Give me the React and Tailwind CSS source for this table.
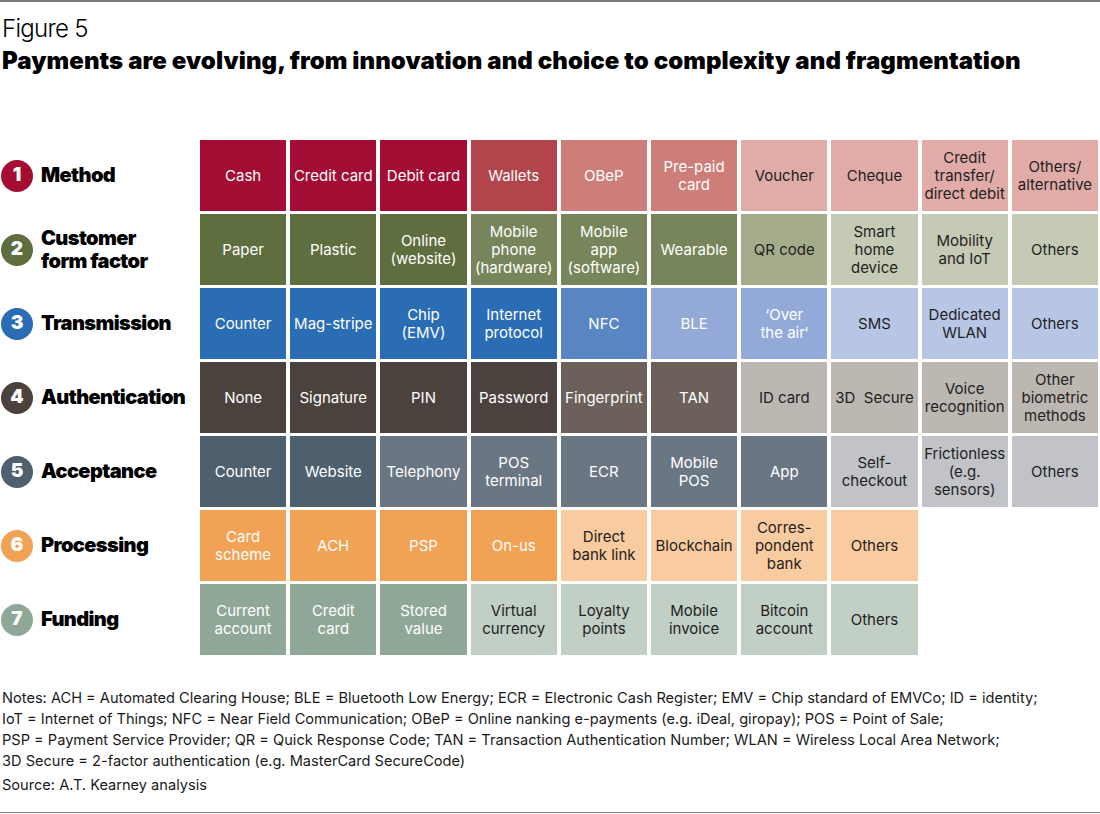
import React from "react";

const W = "text-white";
const D = "text-[#1e1e1e]";

const rows = [
  {
    n: "1",
    circle: "bg-[#a50d33]",
    label: ["Method"],
    cells: [
      ["Cash", "bg-[#a30c33] " + W],
      ["Credit card", "bg-[#a30c33] " + W],
      ["Debit card", "bg-[#a30c33] " + W],
      ["Wallets", "bg-[#b2444c] " + W],
      ["OBeP", "bg-[#ce7e79] " + W],
      ["Pre-paid\ncard", "bg-[#ce7e79] " + W],
      ["Voucher", "bg-[#e1aca8] " + D],
      ["Cheque", "bg-[#e1aca8] " + D],
      ["Credit\ntransfer/\ndirect debit", "bg-[#e1aca8] " + D],
      ["Others/\nalternative", "bg-[#e1aca8] " + D],
    ],
  },
  {
    n: "2",
    circle: "bg-[#5f6e3f]",
    label: ["Customer", "form factor"],
    cells: [
      ["Paper", "bg-[#5f6e3f] " + W],
      ["Plastic", "bg-[#5f6e3f] " + W],
      ["Online\n(website)", "bg-[#5f6e3f] " + W],
      ["Mobile\nphone\n(hardware)", "bg-[#77865a] " + W],
      ["Mobile\napp\n(software)", "bg-[#77865a] " + W],
      ["Wearable", "bg-[#77865a] " + W],
      ["QR code", "bg-[#a5ac8a] " + D],
      ["Smart\nhome\ndevice", "bg-[#c5cab4] " + D],
      ["Mobility\nand IoT", "bg-[#c5cab4] " + D],
      ["Others", "bg-[#c5cab4] " + D],
    ],
  },
  {
    n: "3",
    circle: "bg-[#2a6db5]",
    label: ["Transmission"],
    cells: [
      ["Counter", "bg-[#2a6db5] " + W],
      ["Mag-stripe", "bg-[#2a6db5] " + W],
      ["Chip\n(EMV)", "bg-[#2a6db5] " + W],
      ["Internet\nprotocol", "bg-[#2a6db5] " + W],
      ["NFC", "bg-[#5b86c4] " + W],
      ["BLE", "bg-[#93a9d8] " + W],
      ["‘Over\nthe air‘", "bg-[#93a9d8] " + W],
      ["SMS", "bg-[#b8c6e6] " + D],
      ["Dedicated\nWLAN", "bg-[#b8c6e6] " + D],
      ["Others", "bg-[#b8c6e6] " + D],
    ],
  },
  {
    n: "4",
    circle: "bg-[#4b423d]",
    label: ["Authentication"],
    cells: [
      ["None", "bg-[#4b423d] " + W],
      ["Signature", "bg-[#4b423d] " + W],
      ["PIN", "bg-[#4b423d] " + W],
      ["Password", "bg-[#4b423d] " + W],
      ["Fingerprint", "bg-[#6b605a] " + W],
      ["TAN", "bg-[#6b605a] " + W],
      ["ID card", "bg-[#bdb7b2] " + D],
      ["3D  Secure", "bg-[#bdb7b2] " + D],
      ["Voice\nrecognition", "bg-[#bdb7b2] " + D],
      ["Other\nbiometric\nmethods", "bg-[#bdb7b2] " + D],
    ],
  },
  {
    n: "5",
    circle: "bg-[#4e5f6d]",
    label: ["Acceptance"],
    cells: [
      ["Counter", "bg-[#4e5f6d] " + W],
      ["Website", "bg-[#4e5f6d] " + W],
      ["Telephony", "bg-[#6b7683] " + W],
      ["POS\nterminal", "bg-[#6b7683] " + W],
      ["ECR", "bg-[#6b7683] " + W],
      ["Mobile\nPOS", "bg-[#6b7683] " + W],
      ["App", "bg-[#6b7683] " + W],
      ["Self-\ncheckout", "bg-[#c1c3c8] " + D],
      ["Frictionless\n(e.g.\nsensors)", "bg-[#c1c3c8] " + D],
      ["Others", "bg-[#c1c3c8] " + D],
    ],
  },
  {
    n: "6",
    circle: "bg-[#f2a254]",
    label: ["Processing"],
    cells: [
      ["Card\nscheme", "bg-[#f2a254] " + W],
      ["ACH", "bg-[#f2a254] " + W],
      ["PSP", "bg-[#f2a254] " + W],
      ["On-us", "bg-[#f2a254] " + W],
      ["Direct\nbank link", "bg-[#f9cba0] " + D],
      ["Blockchain", "bg-[#f9cba0] " + D],
      ["Corres-\npondent\nbank", "bg-[#f9cba0] " + D],
      ["Others", "bg-[#f9cba0] " + D],
    ],
  },
  {
    n: "7",
    circle: "bg-[#8fa796]",
    label: ["Funding"],
    cells: [
      ["Current\naccount", "bg-[#8fa796] " + W],
      ["Credit\ncard", "bg-[#8fa796] " + W],
      ["Stored\nvalue", "bg-[#8fa796] " + W],
      ["Virtual\ncurrency", "bg-[#c2cfc5] " + D],
      ["Loyalty\npoints", "bg-[#c2cfc5] " + D],
      ["Mobile\ninvoice", "bg-[#c2cfc5] " + D],
      ["Bitcoin\naccount", "bg-[#c2cfc5] " + D],
      ["Others", "bg-[#c2cfc5] " + D],
    ],
  },
];

function Cell({ text, cls }) {
  const lines = text.split("\n");
  return (
    <div
      className={
        "h-[71px] flex items-center justify-center text-center text-[15px] leading-[18px] whitespace-pre " +
        cls
      }
    >
      <div>
        {lines.map((l, i) => (
          <div key={i}>{l}</div>
        ))}
      </div>
    </div>
  );
}

export default function App() {
  return (
    <div
      className="w-[1100px] h-[814px] bg-white text-black flex flex-col overflow-hidden"
      style={{ fontFamily: "Inter, 'Liberation Sans', sans-serif" }}
    >
      <div className="h-[2px] bg-[#7d7d7d] shrink-0" />
      <div className="h-[138px] shrink-0 pl-[2px]">
        <div className="mt-[12px] text-[24px] leading-[30px] font-light tracking-[-0.7px]">
          Figure 5
        </div>
        <div className="mt-[2px] text-[24px] leading-[30px] font-black tracking-[0.08px]">
          Payments are evolving, from innovation and choice to complexity and fragmentation
        </div>
      </div>
      <div className="grid grid-cols-[196px_repeat(10,minmax(0,1fr))] gap-x-[4px] gap-y-[3px] w-[1098px] shrink-0">
        {rows.map((r) => (
          <React.Fragment key={r.n}>
            <div className="h-[71px] flex items-center gap-[8px] pl-[1px]">
              <div
                className={
                  "w-[32px] h-[32px] rounded-full flex items-center justify-center text-white text-[19px] font-black shrink-0 " +
                  r.circle
                }
              >
                {r.n}
              </div>
              <div className="text-[20px] leading-[23px] font-black tracking-[-0.6px]">
                {r.label.map((l, i) => (
                  <div key={i}>{l}</div>
                ))}
              </div>
            </div>
            {r.cells.map((c, i) => (
              <Cell key={i} text={c[0]} cls={c[1]} />
            ))}
            {r.cells.length < 10 && <div className="col-span-2" />}
          </React.Fragment>
        ))}
      </div>
      <div className="mt-[33px] pl-[2px] text-[14.6px] leading-[21px] text-[#1a1a1a]">
        <div>
          Notes: ACH = Automated Clearing House; BLE = Bluetooth Low Energy; ECR = Electronic Cash Register; EMV = Chip standard of EMVCo; ID = identity;
        </div>
        <div>
          IoT = Internet of Things; NFC = Near Field Communication; OBeP = Online nanking e-payments (e.g. iDeal, giropay); POS = Point of Sale;
        </div>
        <div>
          PSP = Payment Service Provider; QR = Quick Response Code; TAN = Transaction Authentication Number; WLAN = Wireless Local Area Network;
        </div>
        <div>3D Secure = 2-factor authentication (e.g. MasterCard SecureCode)</div>
        <div className="mt-[3px]">Source: A.T. Kearney analysis</div>
      </div>
      <div className="flex-1" />
      <div className="h-[1px] bg-[#7d7d7d] shrink-0 mb-[1px]" />
    </div>
  );
}
